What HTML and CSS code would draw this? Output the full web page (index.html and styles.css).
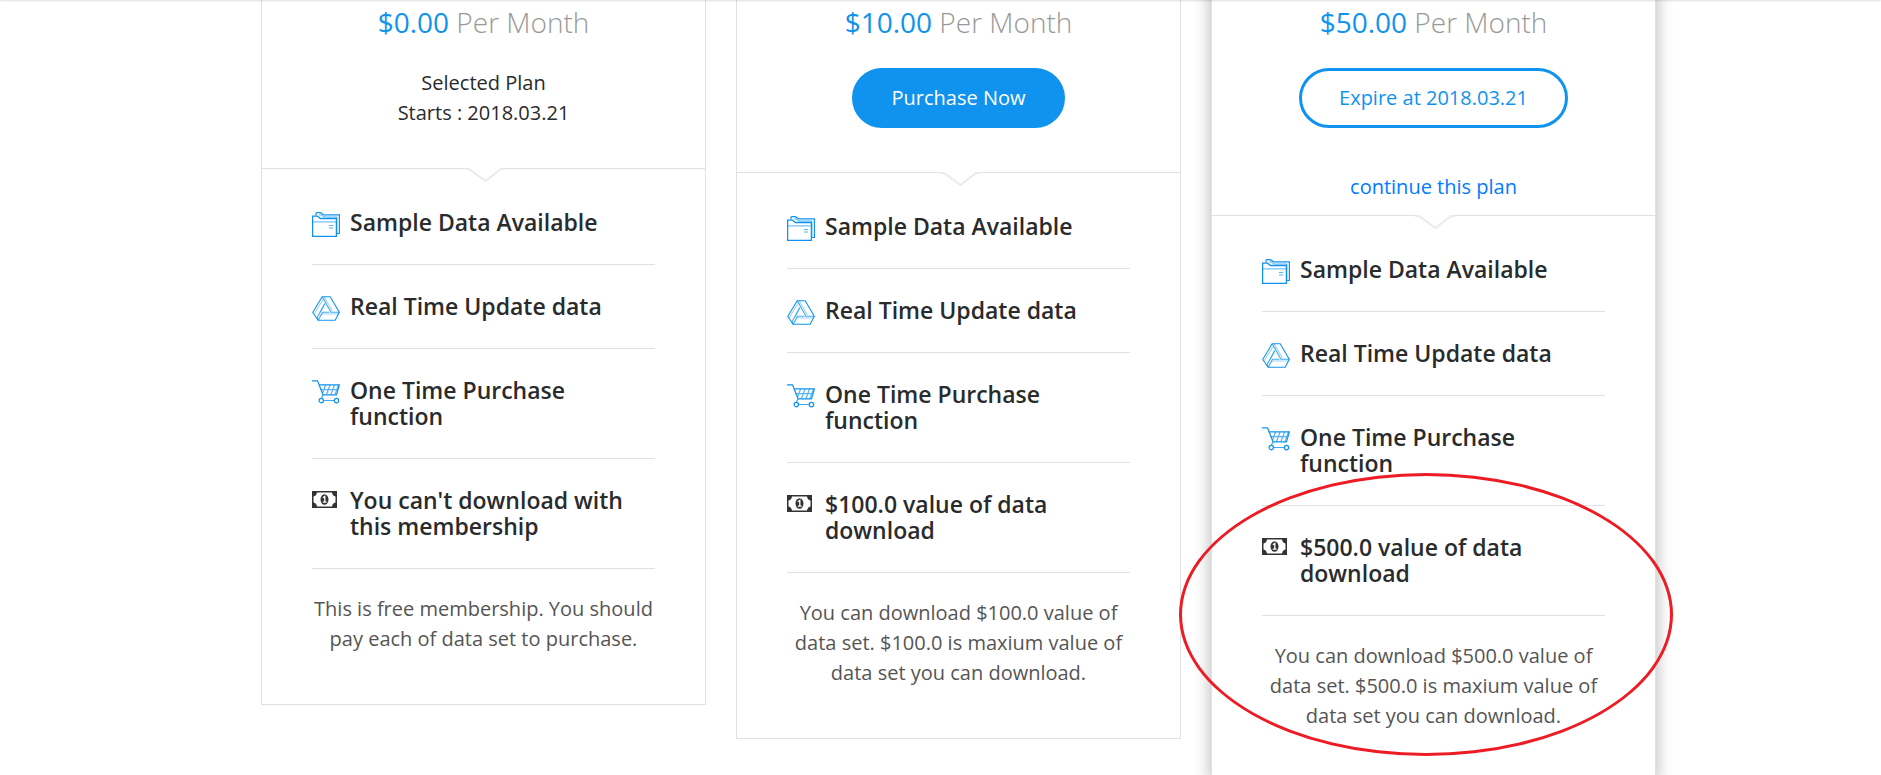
FILE: index.html
```html
<!DOCTYPE html>
<html lang="en">
<head>
<meta charset="utf-8">
<title>Membership Plans</title>
<link rel="stylesheet" href="styles.css">
</head>
<body>
<svg class="defs" aria-hidden="true">
  <symbol id="i-folder" viewBox="0 0 28 26">
    <g fill="none" stroke="#1093ee">
      <path d="M4 3.5V1.500Q4 .7 4.800 .7H8.500L11.500 2.800H27.400V21.500H25" stroke-width="1.200"/>
      <path d="M.6 24.400V4.200H5.500L8.500 6.500H24.400V24.400Z" stroke-width="1.300"/>
      <path d="M.6 9.900H24.400M7 2.900H9L12 5H24.900V21" stroke-width="1" opacity=".7"/>
      <path d="M17 13.500H21M17 16H21" stroke-width="1.200" opacity=".7"/>
    </g>
  </symbol>
  <symbol id="i-drive" viewBox="0 0 28 26">
    <g fill="none" stroke="#1093ee" stroke-width="1.100" stroke-linejoin="round">
      <path d="M10.200 .7H18.200L27.300 16.200L23.200 24.300H6.200L.7 16.500Z"/>
      <path d="M10.200 .7L19 16.200H27.300M12.800 7.500L5 21.800L6.200 24.300M17.500 16.200H10.500L6.200 24.300" opacity=".8"/>
      <path d="M12 .9L20.500 15M11.200 3.200L2.200 17.800M9 18H26.200M12.500 8L8.500 16.500" opacity=".4"/>
    </g>
  </symbol>
  <symbol id="i-cart" viewBox="0 0 28 26">
    <g fill="none" stroke="#1093ee" stroke-width="1.200" stroke-linejoin="round">
      <path d="M0 .8H5.500L11 14.800H24.500L27.400 4.800H7"/>
      <path d="M8.500 9.600H26M13.500 5L10.500 13.500M18 5L14.500 14.500M22.500 5L19 14.500M26.500 5L23 14.500" opacity=".7"/>
      <path d="M11 15L9.300 18.500M11.500 20.500H22.500" opacity=".8"/>
      <circle cx="9.300" cy="20.600" r="2.200"/>
      <circle cx="24.500" cy="20.600" r="2.200"/>
    </g>
  </symbol>
  <symbol id="i-money" viewBox="0 0 28 26">
    <path fill="#333" fill-rule="evenodd" d="M0 1H25V18H0ZM5 2.500Q4.500 6 1.500 6.500V12.500Q4.500 13 5 16.500H20Q20.500 13 23.500 12.500V6.500Q20.500 6 20 2.500Z"/>
    <ellipse cx="12.500" cy="9.500" rx="4" ry="5.200" fill="#333"/>
    <path d="M10.800 7.800L12.800 6.500V12.200M10.800 12.200H14.600" fill="none" stroke="#fff" stroke-width="1.300"/>
  </symbol>
  <symbol id="i-notch" viewBox="0 0 40 16">
    <path d="M1 0H39V3H35L20.500 14L5 3H1Z" fill="#fff"/>
    <path d="M0 2H4L20.500 14L36 2H40" fill="none" stroke="#ebebeb" stroke-width="2"/>
  </symbol>
</svg>

<header class="topbar"></header>

<main class="plans">
  <article class="plan">
    <div class="plan-head">
      <h2 class="price"><strong>$0.00</strong> Per Month</h2>
      <p class="status">Selected Plan<br>Starts : 2018.03.21</p>
      <svg class="notch" aria-hidden="true"><use href="#i-notch"/></svg>
    </div>
    <div class="plan-body">
      <ul class="features">
        <li><svg class="icon" aria-hidden="true"><use href="#i-folder"/></svg><span>Sample Data Available</span></li>
        <li><svg class="icon" aria-hidden="true"><use href="#i-drive"/></svg><span>Real Time Update data</span></li>
        <li><svg class="icon" aria-hidden="true"><use href="#i-cart"/></svg><span>One Time Purchase function</span></li>
        <li><svg class="icon" aria-hidden="true"><use href="#i-money"/></svg><span>You can't download with this membership</span></li>
      </ul>
      <p class="note">This is free membership. You should pay each of data set to purchase.</p>
    </div>
  </article>

  <article class="plan">
    <div class="plan-head plan-head-action">
      <h2 class="price"><strong>$10.00</strong> Per Month</h2>
      <button class="btn" type="button">Purchase Now</button>
      <svg class="notch" aria-hidden="true"><use href="#i-notch"/></svg>
    </div>
    <div class="plan-body">
      <ul class="features">
        <li><svg class="icon" aria-hidden="true"><use href="#i-folder"/></svg><span>Sample Data Available</span></li>
        <li><svg class="icon" aria-hidden="true"><use href="#i-drive"/></svg><span>Real Time Update data</span></li>
        <li><svg class="icon" aria-hidden="true"><use href="#i-cart"/></svg><span>One Time Purchase function</span></li>
        <li><svg class="icon" aria-hidden="true"><use href="#i-money"/></svg><span>$100.0 value of data download</span></li>
      </ul>
      <p class="note">You can download $100.0 value of data set. $100.0 is maxium value of data set you can download.</p>
    </div>
  </article>

  <article class="plan plan-current">
    <div class="plan-head plan-head-renew">
      <h2 class="price"><strong>$50.00</strong> Per Month</h2>
      <button class="btn btn-outline" type="button">Expire at 2018.03.21</button>
      <a class="renew" href="#renew">continue this plan</a>
      <svg class="notch" aria-hidden="true"><use href="#i-notch"/></svg>
    </div>
    <div class="plan-body">
      <ul class="features">
        <li><svg class="icon" aria-hidden="true"><use href="#i-folder"/></svg><span>Sample Data Available</span></li>
        <li><svg class="icon" aria-hidden="true"><use href="#i-drive"/></svg><span>Real Time Update data</span></li>
        <li><svg class="icon" aria-hidden="true"><use href="#i-cart"/></svg><span>One Time Purchase function</span></li>
        <li><svg class="icon" aria-hidden="true"><use href="#i-money"/></svg><span>$500.0 value of data download</span></li>
      </ul>
      <p class="note">You can download $500.0 value of data set. $500.0 is maxium value of data set you can download.</p>
    </div>
    <div class="marker"></div>
  </article>
</main>
</body>
</html>
```

FILE: styles.css
```css
* {
  box-sizing: border-box;
}

body {
  margin: 0;
  background: #fff;
  color: #292b2c;
  font-family: "Open Sans", "Noto Sans", sans-serif;
  font-size: 20px;
  line-height: 30px;
  overflow-x: hidden;
}

h2,
p,
ul {
  margin: 0;
  padding: 0;
}

.defs {
  position: absolute;
  width: 0;
  height: 0;
}

.topbar {
  position: fixed;
  top: -10px;
  left: 0;
  right: 0;
  z-index: 2;
  height: 10px;
  box-shadow: 0 0 3px rgba(0, 0, 0, 0.25);
}

.plans {
  display: grid;
  grid-template-columns: repeat(3, 1fr);
  gap: 30px;
  align-items: start;
  margin-top: -40px;
  padding: 0 225px 0 261px;
}

.plan {
  position: relative;
  border: 1px solid #e1e1e1;
  background: #fff;
}

.plan-current {
  box-shadow: 0 0 16px rgba(0, 0, 0, 0.3);
}

.plan-head {
  position: relative;
  display: flex;
  flex-direction: column;
  align-items: center;
  padding: 43px 20px 40px;
  border-bottom: 1px solid #e1e1e1;
  text-align: center;
}

.plan-head-action {
  padding-bottom: 44px;
}

.plan-head-renew {
  padding-bottom: 13px;
}

.price {
  margin-bottom: 27px;
  color: #999;
  font-size: 28px;
  font-weight: 300;
  line-height: 37px;
}

.price strong {
  color: #1093ee;
  font-weight: 400;
}

.btn {
  height: 60px;
  padding: 0 37px;
  border: 3px solid #1093ee;
  border-radius: 30px;
  background: #1093ee;
  color: #fff;
  font: inherit;
}

.btn-outline {
  background: #fff;
  color: #1093ee;
}

.renew {
  margin-top: 44px;
  color: #007bff;
  text-decoration: none;
}

.notch {
  position: absolute;
  bottom: -15px;
  left: 50%;
  width: 40px;
  height: 16px;
  margin-left: -19px;
}

.plan-body {
  padding: 12px 50px 50px;
}

.features {
  list-style: none;
}

.features li {
  display: flex;
  gap: 10px;
  padding: 28px 0 29px;
  border-bottom: 1px solid #e1e1e1;
  font-size: 23px;
  font-weight: 600;
  line-height: 26px;
}

.icon {
  flex: none;
  width: 28px;
  height: 26px;
  margin: 3px 0 -3px;
}

.note {
  padding-top: 25px;
  color: #555;
  text-align: center;
}

.marker {
  position: absolute;
  right: -18px;
  bottom: 25px;
  left: -33px;
  height: 283px;
  border: 3px solid #ed1c24;
  border-radius: 50%;
  pointer-events: none;
}
```
